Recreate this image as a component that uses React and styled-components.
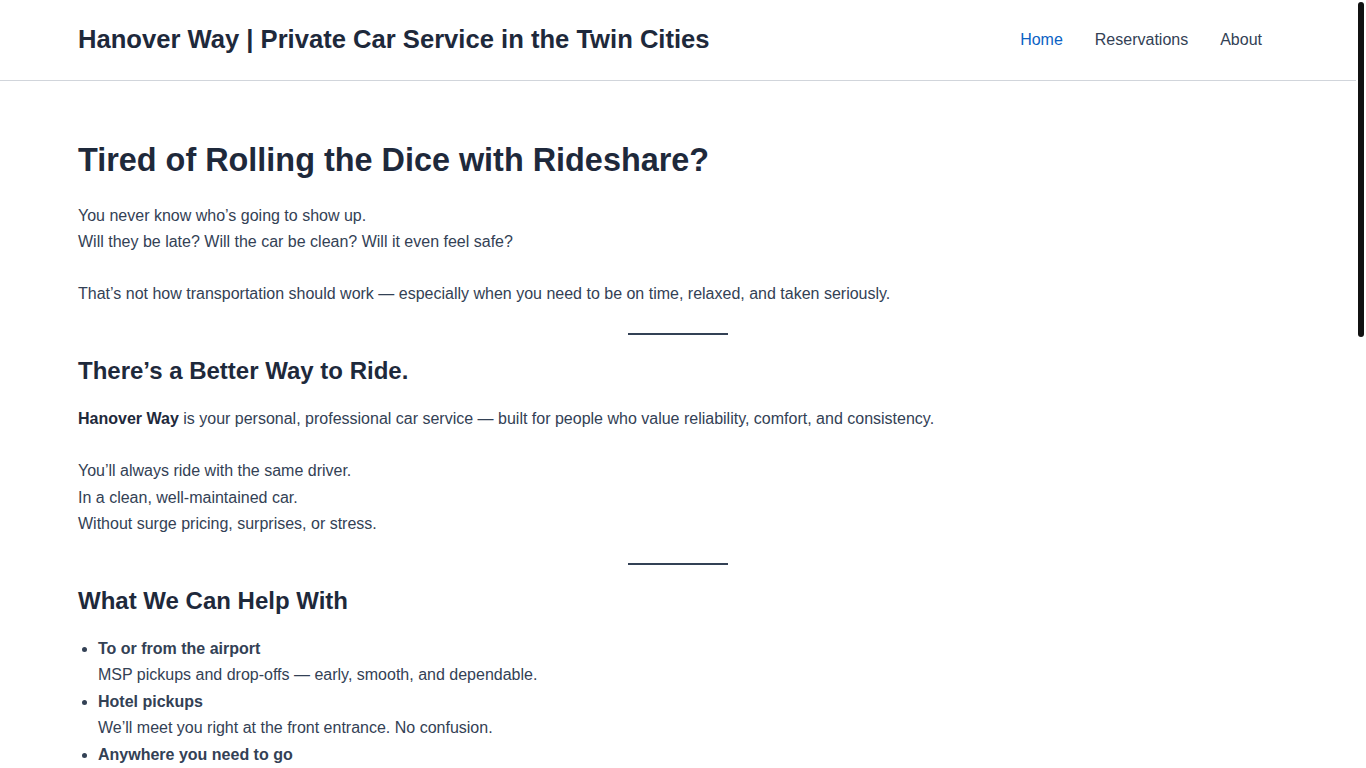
import styled, { createGlobalStyle } from "styled-components";

const GlobalStyle = createGlobalStyle`
  body {
    margin: 0 10px 0 0;
    background: #fff;
    color: #334155;
    font-family: "Liberation Sans", Arial, sans-serif;
    font-size: 16px;
    line-height: 1.65;
  }
  * {
    box-sizing: border-box;
  }
`;

const links = [
  { label: "Home", active: true },
  { label: "Reservations" },
  { label: "About" },
];

export default function App() {
  return (
    <>
      <GlobalStyle />
      <ScrollThumb aria-hidden="true" />
      <Header>
        <HeaderInner>
          <Brand href="#">Hanover Way | Private Car Service in the Twin Cities</Brand>
          <Nav>
            {links.map((l) => (
              <NavLink key={l.label} href="#" $active={l.active}>
                {l.label}
              </NavLink>
            ))}
          </Nav>
        </HeaderInner>
      </Header>

      <Main>
        <Title>Tired of Rolling the Dice with Rideshare?</Title>
        <Text>
          You never know who’s going to show up.
          <br />
          Will they be late? Will the car be clean? Will it even feel safe?
        </Text>
        <Text>
          That’s not how transportation should work — especially when you need to
          be on time, relaxed, and taken seriously.
        </Text>

        <Divider />

        <Heading>There’s a Better Way to Ride.</Heading>
        <Text>
          <strong>Hanover Way</strong> is your personal, professional car service —
          built for people who value reliability, comfort, and consistency.
        </Text>
        <Text>
          You’ll always ride with the same driver.
          <br />
          In a clean, well-maintained car.
          <br />
          Without surge pricing, surprises, or stress.
        </Text>

        <Divider />

        <Heading>What We Can Help With</Heading>
        <List>
          <li>
            <strong>To or from the airport</strong>
            <br />
            MSP pickups and drop-offs — early, smooth, and dependable.
          </li>
          <li>
            <strong>Hotel pickups</strong>
            <br />
            We’ll meet you right at the front entrance. No confusion.
          </li>
          <li>
            <strong>Anywhere you need to go</strong>
            <br />
            Dinners, appointments, events, or errands — just tell us where.
          </li>
          <li>
            <strong>Recurring rides</strong>
            <br />
            Weekly appointments or regular commutes, on a schedule you can count on.
          </li>
        </List>

        <Divider />

        <Heading>Why Riders Choose Hanover Way</Heading>
        <List>
          <li>
            <strong>One driver, every time</strong>
            <br />
            No strangers. You’ll know exactly who is picking you up.
          </li>
          <li>
            <strong>Always on time</strong>
            <br />
            We plan ahead so you never have to wonder where your ride is.
          </li>
          <li>
            <strong>Clear, upfront pricing</strong>
            <br />
            No surge, no hidden fees, no surprises at the end of the trip.
          </li>
          <li>
            <strong>A clean, comfortable car</strong>
            <br />
            Quiet, well-kept, and ready for you.
          </li>
        </List>

        <Divider />

        <Heading>Ready to Ride?</Heading>
        <Text>
          Booking is simple. Send a request, and we’ll confirm your ride
          personally.
        </Text>
        <Text>
          <InlineLink href="#">Make a reservation</InlineLink> or{" "}
          <InlineLink href="#">learn more about us</InlineLink>.
        </Text>
      </Main>

      <Footer>
        <FooterInner>© 2025 Hanover Way. Serving Minneapolis, St. Paul, and the surrounding Twin Cities.</FooterInner>
      </Footer>
    </>
  );
}

const ScrollThumb = styled.div`
  position: fixed;
  top: 2px;
  right: 2px;
  width: 6px;
  height: 335px;
  border-radius: 3px;
  background: #111;
  z-index: 10;
`;

const Header = styled.header`
  border-bottom: 1px solid #d1d5db;
  background: #fff;
`;

const HeaderInner = styled.div`
  max-width: 1200px;
  height: 80px;
  margin: 0 auto;
  display: flex;
  align-items: center;
  justify-content: space-between;
`;

const Brand = styled.a`
  font-size: 25.6px;
  font-weight: 700;
  color: #1e293b;
  text-decoration: none;
  line-height: 1.2;
  padding-bottom: 2px;
`;

const Nav = styled.nav`
  display: flex;
  align-items: center;
`;

const NavLink = styled.a`
  padding: 0 16px;
  font-size: 16px;
  color: ${(p) => (p.$active ? "#0b62c4" : "#334155")};
  text-decoration: none;
`;

const Main = styled.main`
  max-width: 1200px;
  margin: 0 auto;
  padding: 60px 0 40px;
`;

const Title = styled.h1`
  margin: 0 0 23px;
  font-size: 32.4px;
  line-height: 1.2;
  font-weight: 700;
  color: #1e293b;
`;

const Heading = styled.h2`
  margin: 0 0 20px;
  font-size: 24px;
  line-height: 1.3;
  font-weight: 700;
  color: #1e293b;
`;

const Text = styled.p`
  margin: 0 0 25.5px;

  strong {
    font-weight: 700;
    color: #1e293b;
  }
`;

const Divider = styled.hr`
  width: 100px;
  height: 2px;
  margin: 0 auto 20px;
  border: 0;
  background: #334155;
`;

const List = styled.ul`
  margin: 0 0 26px;
  padding-left: 20px;

  strong {
    font-weight: 700;
  }
`;

const InlineLink = styled.a`
  color: #0b62c4;
  text-decoration: underline;
`;

const Footer = styled.footer`
  border-top: 1px solid #d1d5db;
`;

const FooterInner = styled.div`
  max-width: 1200px;
  margin: 0 auto;
  padding: 32px 0 48px;
  font-size: 14px;
  color: #64748b;
`;
